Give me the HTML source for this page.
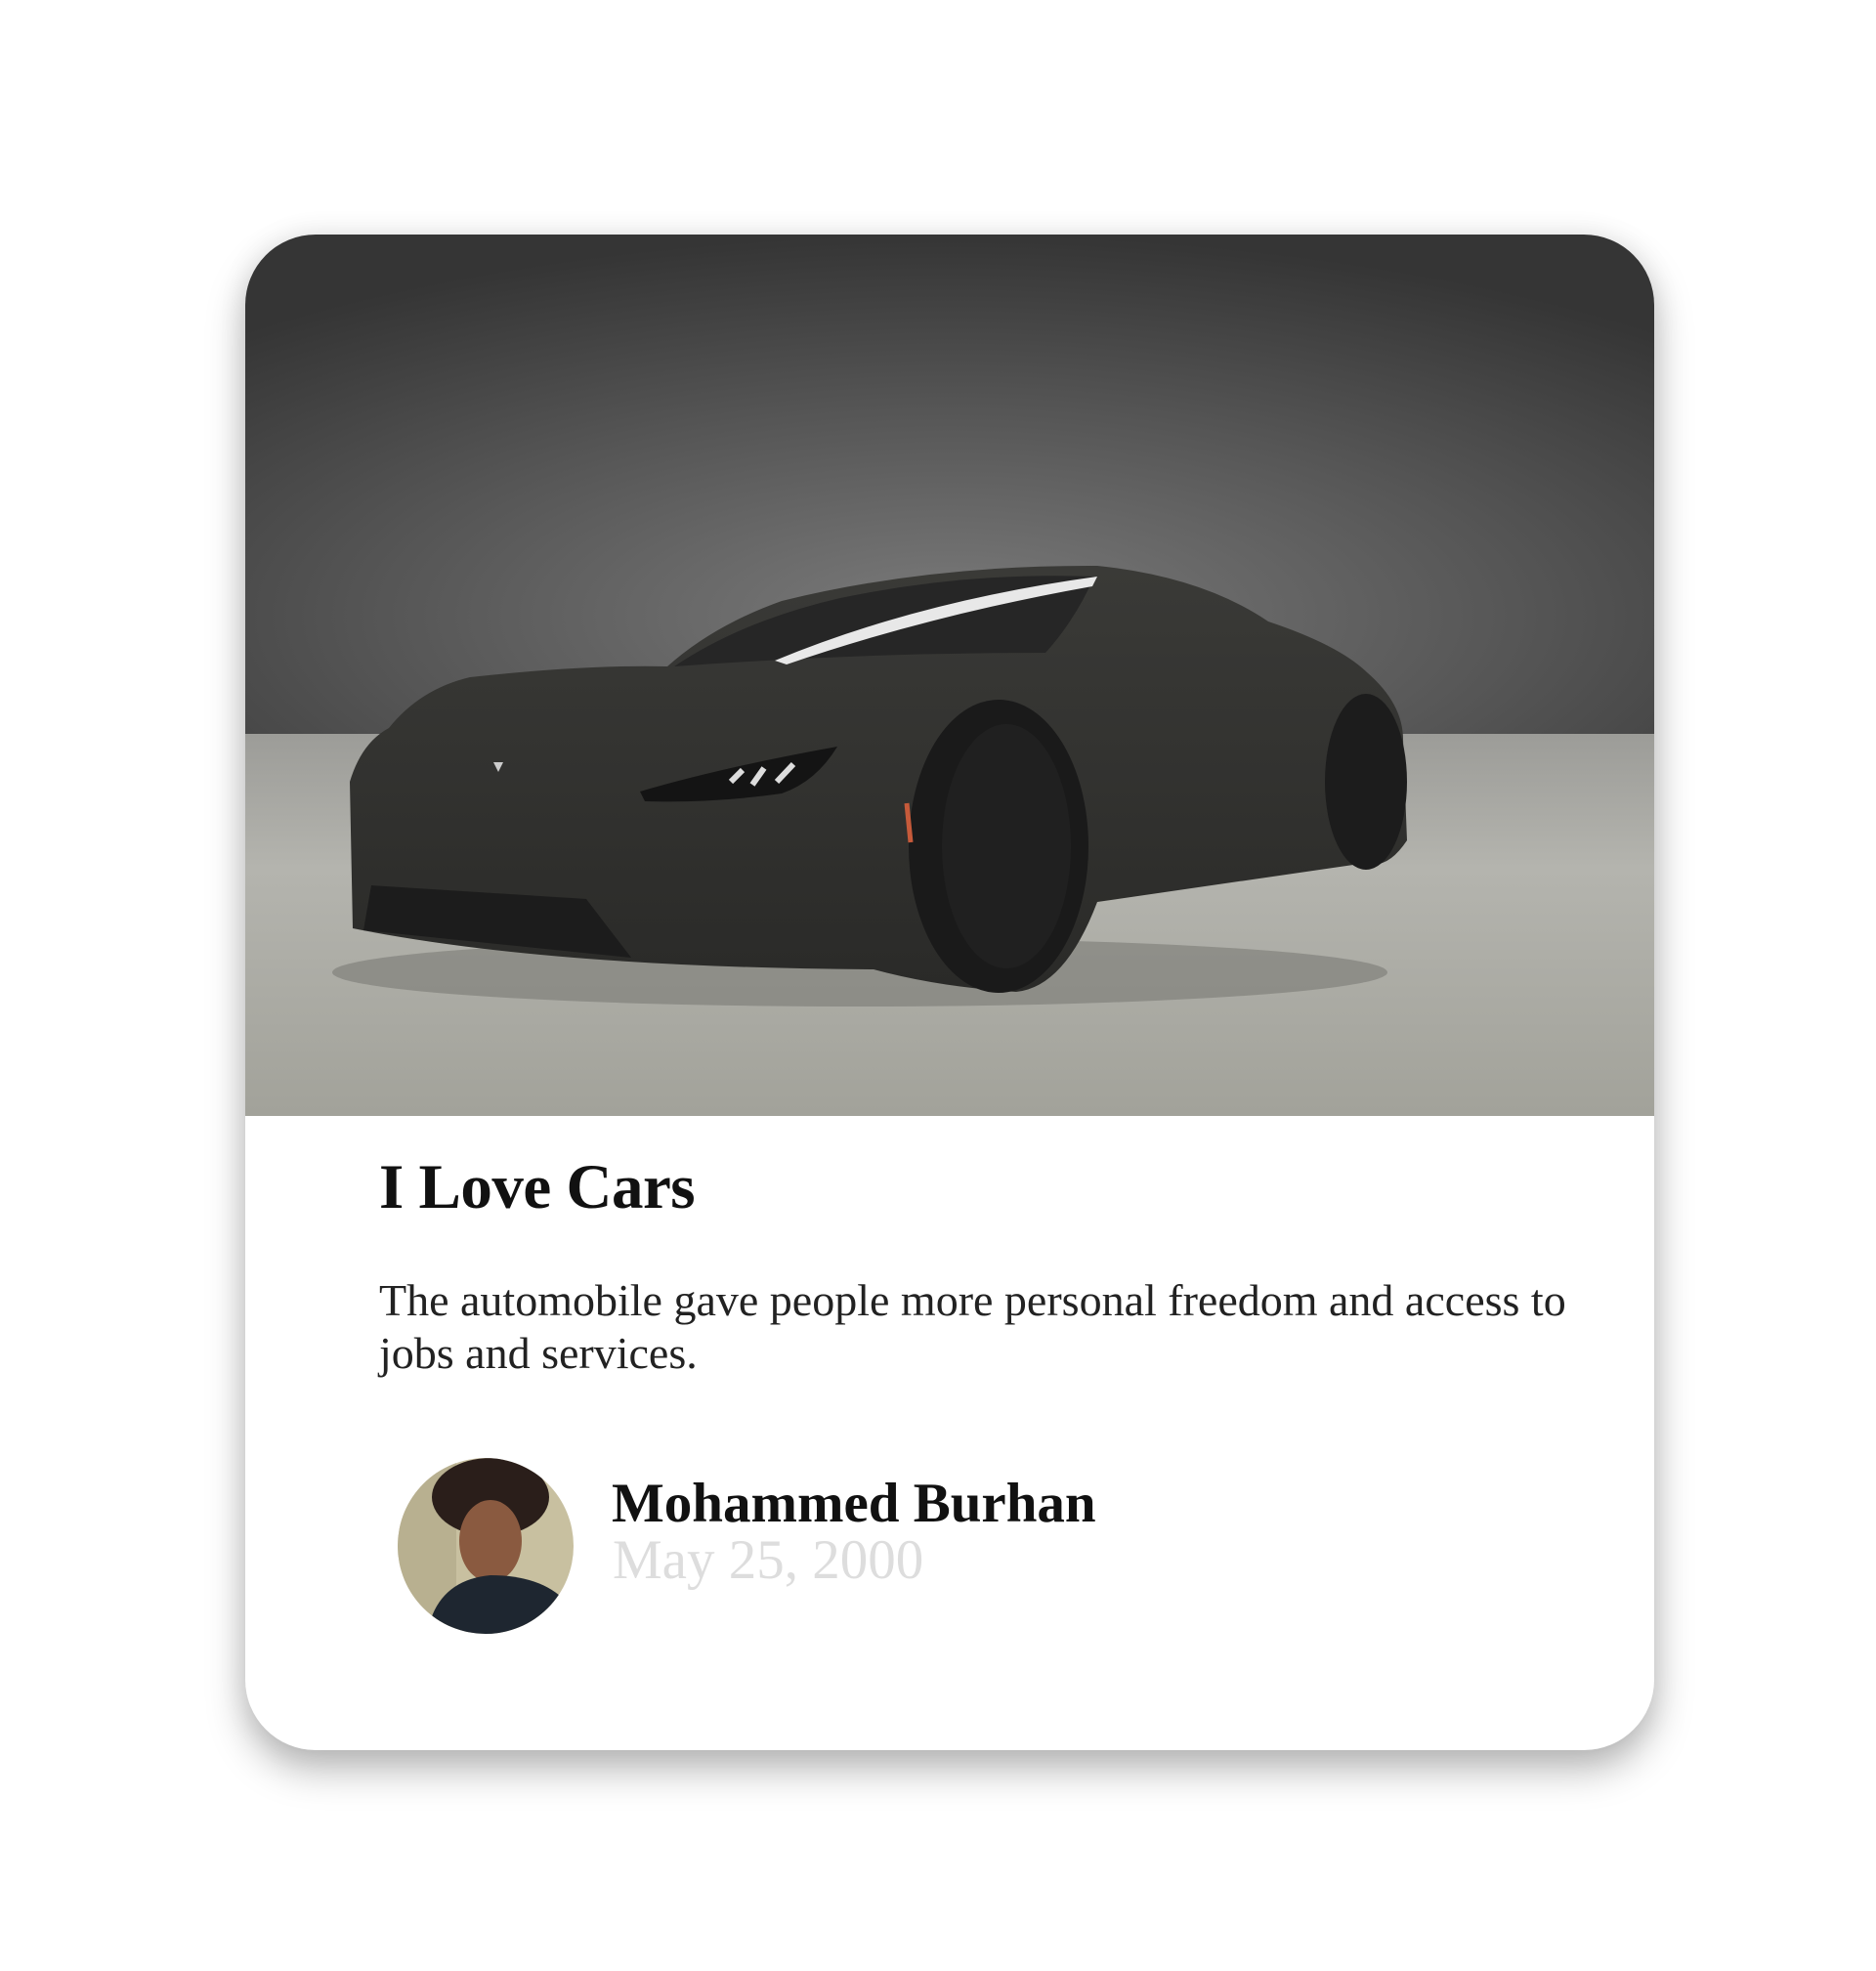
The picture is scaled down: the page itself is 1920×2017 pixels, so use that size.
<!DOCTYPE html>
<html><head><meta charset="utf-8"><style>
html,body{margin:0;padding:0;background:#fff;}
body{width:1920px;height:2017px;position:relative;overflow:hidden;font-family:"Liberation Serif",serif;}
.card{position:absolute;left:251px;top:240px;width:1442px;height:1551px;border-radius:72px;background:#fff;overflow:hidden;box-shadow:0 20px 40px rgba(0,0,0,0.28),0 0 30px rgba(0,0,0,0.08);}
.img{position:absolute;left:0;top:0;width:1442px;height:902px;}
h1{position:absolute;left:137px;top:938px;margin:0;font-size:65px;font-weight:bold;color:#111;letter-spacing:-0.5px;}
p{position:absolute;left:137px;top:1064px;width:1245px;margin:0;font-size:46px;line-height:54px;color:#222;}
.av{position:absolute;left:156px;top:1252px;width:180px;height:180px;border-radius:50%;overflow:hidden;}
.name{position:absolute;left:375px;top:1266px;font-size:57px;font-weight:bold;color:#111;}
.date{position:absolute;left:376px;top:1324px;font-size:57px;color:#ddd;}
</style></head><body>
<div class="card">
<svg class="img" viewBox="251 240 1442 902" preserveAspectRatio="none">
<defs>
<radialGradient id="bg" cx="0.5" cy="0.75" r="0.75">
<stop offset="0" stop-color="#7a7a7a"/><stop offset="0.55" stop-color="#555"/><stop offset="1" stop-color="#353535"/>
</radialGradient>
<linearGradient id="fl" x1="0" y1="0" x2="0" y2="1">
<stop offset="0" stop-color="#9c9c98"/><stop offset="0.35" stop-color="#b4b4ae"/><stop offset="1" stop-color="#a2a29a"/>
</linearGradient>
<linearGradient id="body" x1="0" y1="0" x2="0" y2="1">
<stop offset="0" stop-color="#3a3a37"/><stop offset="1" stop-color="#2a2a28"/>
</linearGradient>
</defs>
<rect x="251" y="240" width="1442" height="520" fill="url(#bg)"/>
<rect x="251" y="751" width="1442" height="391" fill="url(#fl)"/>
<ellipse cx="880" cy="995" rx="540" ry="35" fill="#7a7a74" opacity="0.6"/>
<path d="M361 950 L358 800 Q370 760 398 745 Q430 705 481 693 Q600 680 683 682 Q730 640 800 615 Q950 578 1123 579 Q1230 590 1298 636 Q1370 660 1399 688 Q1436 720 1436 757 L1440 860 Q1420 890 1399 883 L1123 923 Q1090 1010 1040 1015 Q960 1010 894 992 Q560 990 361 950 Z" fill="url(#body)"/>
<path d="M690 682 Q760 635 860 612 Q990 585 1120 590 Q1100 635 1070 668 Q880 668 690 682 Z" fill="#262626"/>
<path d="M793 676 Q940 615 1123 590 L1118 600 Q950 630 805 680 Z" fill="#e8e8e8"/>
<ellipse cx="1022" cy="866" rx="92" ry="150" fill="#1a1a1a"/>
<ellipse cx="1030" cy="866" rx="66" ry="125" fill="#202020"/>
<ellipse cx="1398" cy="800" rx="42" ry="90" fill="#1c1c1c"/>
<path d="M655 810 Q740 785 857 764 Q835 800 800 812 Q730 822 660 820 Z" fill="#141414"/>
<path d="M748 800 L760 788 M770 803 L782 786 M795 800 L812 782" stroke="#ddd" stroke-width="6"/>
<path d="M380 906 L600 920 L646 980 L372 952 Z" fill="#1c1c1c"/>
<path d="M928 822 L932 862" stroke="#c65a3a" stroke-width="5"/>
<path d="M505 780 l10 0 l-5 10 Z" fill="#ccc"/>
</svg>
<h1>I Love Cars</h1>
<p>The automobile gave people more personal freedom and access to jobs and services.</p>
<div class="av"><svg width="180" height="180" viewBox="0 0 180 180">
<rect width="180" height="180" fill="#c8c0a0"/>
<rect x="0" y="0" width="60" height="180" fill="#b8b090"/>
<ellipse cx="95" cy="40" rx="60" ry="40" fill="#2a1e1a"/>
<ellipse cx="95" cy="85" rx="32" ry="42" fill="#8a5a40"/>
<path d="M30 180 Q40 125 95 120 Q150 120 175 150 L180 180 Z" fill="#1e2630"/>
</svg></div>
<div class="name">Mohammed Burhan</div>
<div class="date">May 25, 2000</div>
</div>
</body></html>
